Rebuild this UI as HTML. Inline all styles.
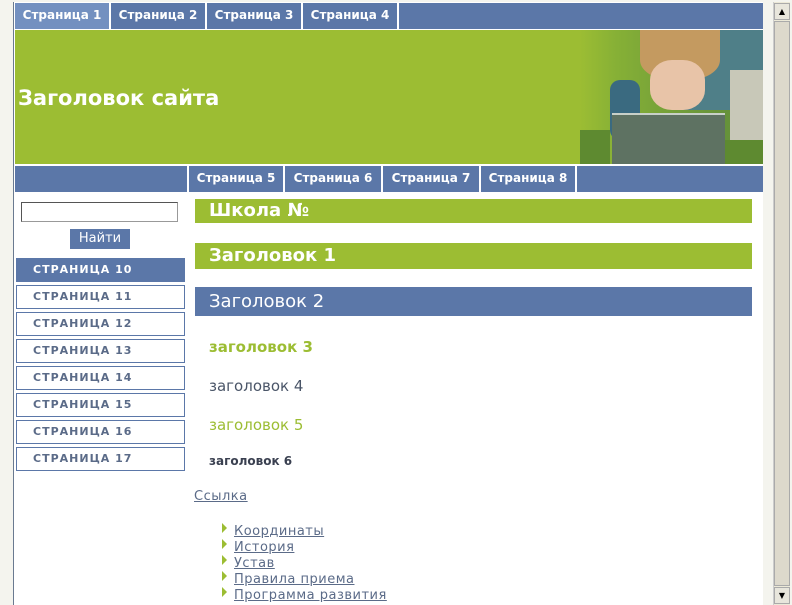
<!DOCTYPE html>
<html><head><meta charset="utf-8"><style>
*{margin:0;padding:0;box-sizing:border-box}
body{width:792px;height:605px;overflow:hidden;background:#f4f4ee;font-family:"DejaVu Sans","Liberation Sans",sans-serif;position:relative}
#frame{position:absolute;left:13px;top:2px;width:750px;height:603px;background:#fff;border-left:1px solid #6a7a90;overflow:hidden}
.nav{position:absolute;background:#5b77a8;height:26px;left:1px;width:749px}
.nav a{position:absolute;top:0;height:26px;line-height:25px;color:#fff;font-weight:bold;font-size:12px;text-align:center;border-right:2px solid #fff;text-decoration:none}
#hdr{position:absolute;left:1px;top:27px;width:749px;height:136px;background:#9cbd33;border-top:1px solid #fff;border-bottom:1px solid #fff}
#hdr h1{position:absolute;left:3px;top:56px;color:#fff;font-size:21px;font-weight:bold}
#pic{position:absolute;right:0;top:0;width:184px;height:134px;background:linear-gradient(90deg,#9cbd33,#86b036 20%,#6e9a3a 60%,#5e8a3a 100%);overflow:hidden}
#pic div{position:absolute}
.side a{position:absolute;left:2px;width:169px;height:24px;border:1px solid #5b77a8;color:#5b6b88;font-size:11px;font-weight:bold;letter-spacing:1px;padding-left:16px;line-height:22px}
.bar{position:absolute;left:181px;width:557px;color:#fff;padding-left:14px;font-weight:bold}
.lk{color:#5b6b88;text-decoration:underline;font-size:13px;position:absolute;letter-spacing:.5px}
.tri{position:absolute;left:208px;width:0;height:0;border-left:5px solid #9cbd33;border-top:5px solid transparent;border-bottom:5px solid transparent}
#sb{position:absolute;left:773px;top:2px;width:17px;height:603px;background:#ece9d8;border-left:1px solid #ccc}
</style></head><body>
<div id="frame">
<div class="nav" style="top:1px">
<a style="left:0;width:96px;background:#7390c0">Страница 1</a>
<a style="left:96px;width:96px">Страница 2</a>
<a style="left:192px;width:96px">Страница 3</a>
<a style="left:288px;width:96px">Страница 4</a>
</div>
<div id="hdr"><h1>Заголовок сайта</h1>
<div id="pic">
<div style="left:95px;top:0;width:89px;height:80px;background:#4f7f88;border-radius:20px 0 0 10px"></div>
<div style="left:150px;top:40px;width:34px;height:70px;background:#c8c8b8"></div>
<div style="left:60px;top:0;width:80px;height:50px;background:#c49a60;border-radius:0 0 40% 40%"></div>
<div style="left:70px;top:30px;width:55px;height:50px;background:#e8c4a8;border-radius:40%"></div>
<div style="left:30px;top:50px;width:30px;height:60px;background:#3a6a80;border-radius:10px"></div>
<div style="left:32px;top:83px;width:113px;height:52px;background:#5e7262;border-top:2px solid #c8d0c8"></div>
<div style="left:0;top:100px;width:30px;height:34px;background:#5e8a30"></div>
<div style="left:145px;top:110px;width:39px;height:24px;background:#5e8a30"></div>
</div></div>
<div class="nav" style="top:164px">
<a style="left:172px;width:98px;border-left:2px solid #fff">Страница 5</a>
<a style="left:270px;width:98px">Страница 6</a>
<a style="left:368px;width:98px">Страница 7</a>
<a style="left:466px;width:96px">Страница 8</a>
</div>
<div style="position:absolute;left:7px;top:200px;width:157px;height:20px;border:1px solid #999;border-top-color:#555;border-left-color:#555"></div>
<div style="position:absolute;left:56px;top:227px;width:60px;height:20px;background:#5b77a8;color:#fff;font-size:13px;text-align:center;line-height:20px">Найти</div>
<div class="side">
<a style="top:256px;background:#5b77a8;color:#fff">СТРАНИЦА 10</a>
<a style="top:283px">СТРАНИЦА 11</a>
<a style="top:310px">СТРАНИЦА 12</a>
<a style="top:337px">СТРАНИЦА 13</a>
<a style="top:364px">СТРАНИЦА 14</a>
<a style="top:391px">СТРАНИЦА 15</a>
<a style="top:418px">СТРАНИЦА 16</a>
<a style="top:445px">СТРАНИЦА 17</a>
</div>
<div class="bar" style="top:197px;height:24px;background:#9cbd33;font-size:18px;line-height:24px">Школа №</div>
<div class="bar" style="top:241px;height:26px;background:#9cbd33;font-size:18px;line-height:26px">Заголовок 1</div>
<div class="bar" style="top:285px;height:29px;background:#5b77a8;font-size:18px;font-weight:normal;line-height:29px">Заголовок 2</div>
<div style="position:absolute;left:195px;top:336px;color:#9cbd33;font-size:15px;font-weight:bold">заголовок 3</div>
<div style="position:absolute;left:195px;top:375px;color:#4a5568;font-size:15px">заголовок 4</div>
<div style="position:absolute;left:195px;top:414px;color:#9cbd33;font-size:15px">заголовок 5</div>
<div style="position:absolute;left:195px;top:452px;color:#3a4050;font-size:12px;font-weight:bold">заголовок 6</div>
<a class="lk" style="left:180px;top:487px">Ссылка</a>
<div class="tri" style="top:521px"></div><a class="lk" style="left:220px;top:522px">Координаты</a>
<div class="tri" style="top:537px"></div><a class="lk" style="left:220px;top:538px">История</a>
<div class="tri" style="top:553px"></div><a class="lk" style="left:220px;top:554px">Устав</a>
<div class="tri" style="top:569px"></div><a class="lk" style="left:220px;top:570px">Правила приема</a>
<div class="tri" style="top:585px"></div><a class="lk" style="left:220px;top:586px">Программа развития</a>
</div>
<div id="sb">
<div style="position:absolute;top:1px;left:0;width:16px;height:17px;background:#e8e6dc;border:1px solid #aaa;font-size:8px;text-align:center;line-height:15px">▲</div>
<div style="position:absolute;top:19px;left:0;width:16px;height:565px;background:#ddd9cc;border:1px solid #aaa"></div>
<div style="position:absolute;top:585px;left:0;width:16px;height:17px;background:#e8e6dc;border:1px solid #aaa;font-size:8px;text-align:center;line-height:15px">▼</div>
</div>
</body></html>
